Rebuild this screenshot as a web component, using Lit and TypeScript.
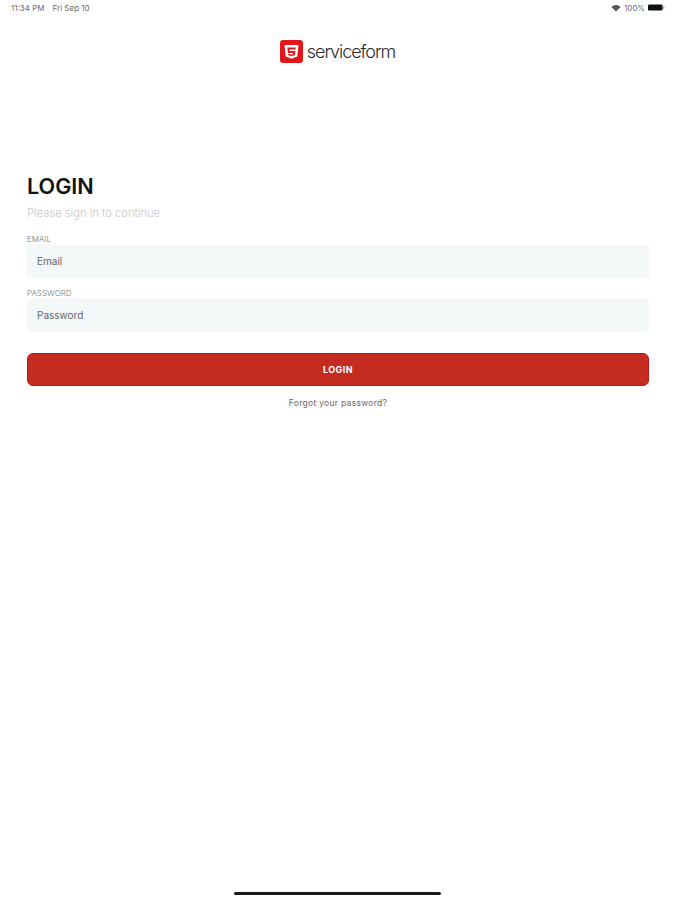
import { LitElement, html, css } from "lit";
import { customElement } from "lit/decorators.js";

@customElement("app-root")
export class AppRoot extends LitElement {
  static styles = css`
    :host {
      display: block;
      width: 675px;
      height: 900px;
      background: #fff;
      font-family: Inter, "Liberation Sans", sans-serif;
      overflow: hidden;
    }
    .page {
      height: 900px;
      display: flex;
      flex-direction: column;
      box-sizing: border-box;
    }
    .status {
      height: 15px;
      display: flex;
      align-items: center;
      justify-content: space-between;
      padding: 0 10px 0 11px;
      font-size: 8px;
      color: #6a6a6a;
      flex: none;
    }
    .status .left { display: flex; gap: 8px; }
    .status .right { display: flex; align-items: center; gap: 3px; font-size: 7.8px; }
    .logo {
      margin-top: 25px;
      height: 23px;
      display: flex;
      justify-content: center;
      align-items: center;
      gap: 4px;
      flex: none;
    }
    .logo span {
      font-size: 18px;
      font-weight: 300;
      color: #2b2b2b;
      letter-spacing: -1.05px;
      line-height: 23px;
      padding-bottom: 1px;
    }
    .form {
      margin-top: 110px;
      padding: 0 26px 0 27px;
      display: flex;
      flex-direction: column;
      flex: none;
    }
    h1 {
      margin: 0;
      font-size: 21.6px;
      line-height: 26px;
      font-weight: 600;
      color: #111;
    }
    .sub {
      margin-top: 7px;
      font-size: 11.2px;
      line-height: 14px;
      font-weight: 300;
      color: #c8c8c8;
    }
    .label {
      margin-top: 14px;
      font-size: 8px;
      line-height: 11px;
      color: #777;
      font-weight: 300;
    }
    .label.second { margin-top: 10px; }
    .input {
      height: 33px;
      box-sizing: border-box;
      background: #f5f8f9;
      padding: 0 0 2px 10px;
      display: flex;
      align-items: center;
      font-size: 10px;
      color: #5f6669;
    }
    .btn {
      margin-top: 21px;
      height: 33px;
      box-sizing: border-box;
      background: #c42c21;
      border: 1.5px solid #bd1612;
      border-radius: 6px;
      display: flex;
      align-items: center;
      justify-content: center;
      color: #fff;
      font-size: 9px;
      font-weight: 700;
      letter-spacing: 0.4px;
    }
    .forgot {
      margin-top: 11px;
      text-align: center;
      font-size: 8.5px;
      line-height: 12px;
      color: #666;
      letter-spacing: 0.3px;
    }
    .home {
      margin-top: auto;
      margin-bottom: 5px;
      align-self: center;
      width: 207px;
      height: 3px;
      border-radius: 2px;
      background: #1a1a1a;
      flex: none;
    }
  `;

  render() {
    return html`
      <div class="page">
        <div class="status">
          <div class="left"><span>11:34 PM</span><span>Fri Sep 10</span></div>
          <div class="right">
            <svg width="10" height="8" viewBox="0 0 10 8">
              <path d="M5 7.6 0.4 2.9a6.6 6.6 0 0 1 9.2 0z" fill="#555" />
            </svg>
            <span>100%</span>
            <svg width="17" height="7" viewBox="0 0 17 7">
              <rect x="0" y="0.5" width="14.5" height="6" rx="1.2" fill="#111" />
              <rect x="15" y="2.2" width="1.4" height="2.6" rx="0.6" fill="#999" />
            </svg>
          </div>
        </div>
        <div class="logo">
          <svg width="23" height="23" viewBox="0 0 23 23">
            <rect width="23" height="23" rx="3" fill="#e0181c" />
            <path d="M4.5 5h14l-1.2 11.6-5.8 2.2-5.8-2.2z" fill="#fff" />
            <path
              d="M7.4 7.6h8.4l-.2 2H9.5l.1 1.5h5.8l-.4 4-3.5 1.2-3.5-1.2-.2-1h2l.1 .1 1.6.4 1.6-.4.1-1.1H7.9z"
              fill="#e0181c"
            />
          </svg>
          <span>serviceform</span>
        </div>
        <div class="form">
          <h1>LOGIN</h1>
          <div class="sub">Please sign in to continue</div>
          <div class="label">EMAIL</div>
          <div class="input">Email</div>
          <div class="label second">PASSWORD</div>
          <div class="input">Password</div>
          <div class="btn">LOGIN</div>
          <div class="forgot">Forgot your password?</div>
        </div>
        <div class="home"></div>
      </div>
    `;
  }
}
